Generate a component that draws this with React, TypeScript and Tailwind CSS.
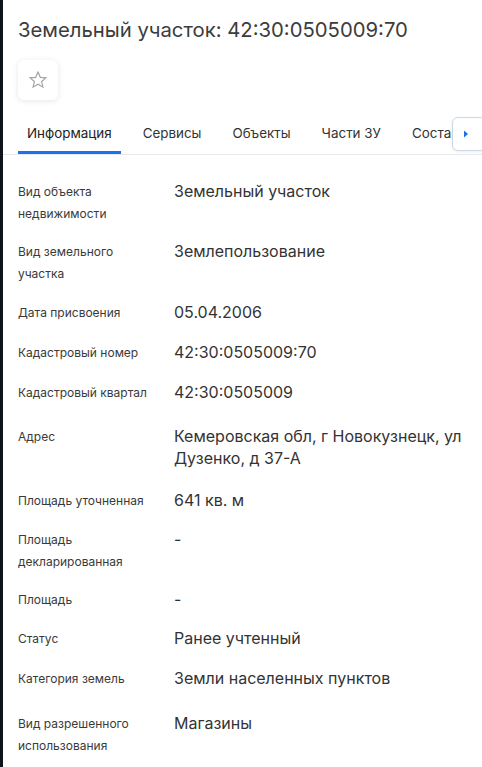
const rows: { label: string; value: string; h: string }[] = [
  { label: "Вид объекта недвижимости", value: "Земельный участок", h: "min-h-[44px]" },
  { label: "Вид земельного участка", value: "Землепользование", h: "min-h-[45px]" },
  { label: "Дата присвоения", value: "05.04.2006", h: "min-h-[24px]" },
  { label: "Кадастровый номер", value: "42:30:0505009:70", h: "min-h-[24px]" },
  { label: "Кадастровый квартал", value: "42:30:0505009", h: "min-h-[28px]" },
  { label: "Адрес", value: "Кемеровская обл, г Новокузнецк, ул Дузенко, д 37-А", h: "min-h-[48px]" },
  { label: "Площадь уточненная", value: "641 кв. м", h: "min-h-[23px]" },
  { label: "Площадь декларированная", value: "-", h: "min-h-[44px]" },
  { label: "Площадь", value: "-", h: "min-h-[23px]" },
  { label: "Статус", value: "Ранее учтенный", h: "min-h-[24px]" },
  { label: "Категория земель", value: "Земли населенных пунктов", h: "min-h-[29px]" },
  { label: "Вид разрешенного использования", value: "Магазины", h: "min-h-[44px]" },
];

const tabs = ["Информация", "Сервисы", "Объекты", "Части ЗУ", "Состав"];

export default function App() {
  return (
    <div className="flex h-[767px] w-[482px] overflow-hidden bg-white font-['Inter',sans-serif] text-[#333]">
      <div className="w-[3px] shrink-0 bg-[#0f131a]" />
      <div className="min-w-0 flex-1">
        <h1 className="pl-[15px] pt-[16px] text-[20.3px] leading-[28px] text-[#3c3c3c]">
          Земельный участок: 42:30:0505009:70
        </h1>

        <div className="ml-[15px] mt-[16px] flex h-[40px] w-[40px] items-center justify-center rounded-md bg-white shadow-[0_1px_6px_rgba(0,0,0,0.1)]">
          <svg width="20" height="20" viewBox="0 0 24 24" fill="none">
            <path
              d="M12 2.5l2.8 6.3 6.7.6-5.1 4.5 1.5 6.7L12 17.1l-5.9 3.5 1.5-6.7-5.1-4.5 6.7-.6z"
              stroke="#a3a3a3"
              strokeWidth="1.4"
              strokeLinejoin="miter"
            />
          </svg>
        </div>

        {/* tabs */}
        <div className="relative mt-[16px] border-b border-[#e6e8eb]">
          <div className="flex gap-[13px] pl-[15px]">
            {tabs.map((t, i) => (
              <div
                key={t}
                className={
                  "whitespace-nowrap px-[9px] pb-[8px] pt-[7px] text-[13.4px] leading-[20px] " +
                  (i === 0 ? "border-b-[3px] border-[#1a73e8] text-[#222]" : "border-b-[3px] border-transparent text-[#333]")
                }
              >
                {t}
              </div>
            ))}
          </div>
          <div className="absolute right-[-4px] top-[1px] flex h-[34px] w-[34px] items-center justify-center rounded-md border border-[#cdd8e6] bg-white shadow-[0_1px_3px_rgba(0,0,0,0.08)]">
            <svg width="6" height="8" viewBox="0 0 6 8" className="-ml-[6px]">
              <path d="M1 0.5L5 4L1 7.5z" fill="#1a73e8" />
            </svg>
          </div>
        </div>

        <div className="flex flex-col gap-[16px] pl-[15px] pr-[12px] pt-[26px]">
          {rows.map((r) => (
            <div key={r.label} className={"flex items-start " + r.h}>
              <div className="w-[156px] shrink-0 pr-[20px] text-[12px] leading-[22px] text-[#3a3a3a]">
                {r.label}
              </div>
              <div className="-mt-[1px] flex-1 text-[16px] leading-[22px] text-[#333]">{r.value}</div>
            </div>
          ))}
        </div>
      </div>
    </div>
  );
}
